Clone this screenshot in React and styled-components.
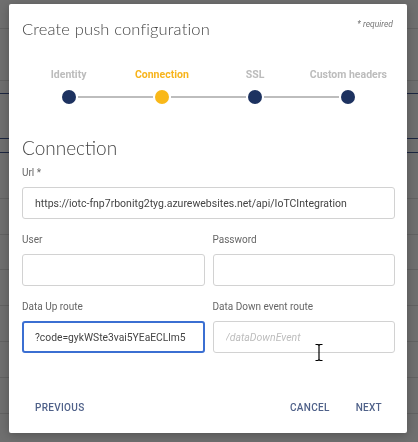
import React from "react";
import styled, { createGlobalStyle } from "styled-components";

const Global = createGlobalStyle`
  html, body { margin: 0; padding: 0; }
  body {
    width: 418px;
    height: 442px;
    overflow: hidden;
    background: #6f6f6f;
    font-family: Roboto, "Liberation Sans", sans-serif;
  }
`;

const Page = styled.div`
  display: flex;
  flex-direction: column;
  width: 418px;
`;

const BgRow = styled.div`
  height: ${(p) => p.$h}px;
  box-sizing: border-box;
  border-bottom: 1px solid ${(p) => (p.$dark ? "#1c2640" : "#626262")};
`;

const Overlay = styled.div`
  position: fixed;
  inset: 0;
  padding: 4px 11px 9px 9px;
  display: flex;
`;

const Dialog = styled.div`
  flex: 1;
  background: #ffffff;
  border-radius: 2px;
  box-shadow: 0 2px 10px rgba(0, 0, 0, 0.25);
  padding: 0 12px 0 13px;
  display: flex;
  flex-direction: column;
`;

const Header = styled.div`
  display: flex;
  justify-content: space-between;
  align-items: flex-start;
  padding-top: 15px;
`;

const Title = styled.h1`
  margin: 0;
  font-family: Lato, "Open Sans", sans-serif;
  font-weight: 300;
  font-size: 16.5px;
  line-height: 20px;
  color: #444;
  letter-spacing: 0.15px;
`;

const Required = styled.span`
  font-size: 8.5px;
  font-style: italic;
  color: #777;
  margin-right: 2px;
`;

const Stepper = styled.div`
  display: grid;
  grid-template-columns: repeat(4, 1fr);
  margin-top: 29px;
`;

const Step = styled.div`
  display: flex;
  flex-direction: column;
  align-items: stretch;
`;

const StepLabel = styled.div`
  text-align: center;
  font-size: 10.5px;
  font-weight: 700;
  line-height: 14px;
  color: ${(p) => (p.$active ? "#f7b41c" : "#bcbcbc")};
`;

const DotRow = styled.div`
  display: flex;
  align-items: center;
  margin-top: 8px;
  height: 14px;
`;

const Half = styled.div`
  flex: 1;
  height: 2px;
  background: ${(p) => (p.$hidden ? "transparent" : "#bdbdbd")};
`;

const Dot = styled.div`
  width: 14px;
  height: 14px;
  border-radius: 50%;
  margin: 0 2px;
  background: ${(p) => (p.$active ? "#f9b819" : "#1d3260")};
`;

const Section = styled.h2`
  margin: 33px 0 0;
  font-family: Lato, "Open Sans", sans-serif;
  font-weight: 300;
  font-size: 19px;
  line-height: 22px;
  color: #444;
`;

const Grid = styled.div`
  display: grid;
  grid-template-columns: 1fr 1fr;
  column-gap: 8px;
  row-gap: 14px;
  margin-top: 7px;
`;

const Field = styled.div`
  display: flex;
  flex-direction: column;
  grid-column: ${(p) => (p.$full ? "1 / -1" : "auto")};
  position: relative;
`;

const Label = styled.label`
  font-size: 10px;
  line-height: 14px;
  color: #666;
  margin-bottom: 7px;
`;

const Input = styled.input`
  box-sizing: border-box;
  height: 32px;
  width: 100%;
  border: ${(p) => (p.$focus ? "2px solid #3b6fd2" : "1px solid #d2d2d2")};
  border-radius: 3px;
  padding: 0 ${(p) => (p.$focus ? 11 : 12)}px;
  font-family: Roboto, "Liberation Sans", sans-serif;
  font-size: ${(p) => (p.$focus ? "10.3px" : "10.5px")};
  color: #444;
  outline: none;
  background: #fff;
  &::placeholder {
    color: #bdbdbd;
    font-style: italic;
  }
`;

const Cursor = styled.svg`
  position: absolute;
  left: 102px;
  top: 44px;
  pointer-events: none;
`;

const Footer = styled.div`
  margin-top: auto;
  margin-bottom: 12px;
  display: flex;
  align-items: center;
`;

const Spacer = styled.div`
  flex: 1;
`;

const TextButton = styled.button`
  border: none;
  background: none;
  padding: 0 13px;
  height: 28px;
  font-family: Roboto, "Liberation Sans", sans-serif;
  font-size: 10px;
  font-weight: 500;
  letter-spacing: 0.3px;
  color: #4f6189;
  cursor: pointer;
`;

const bgRows = [
  { h: 29 }, { h: 52 }, { h: 13, dark: true }, { h: 45, dark: true },
  { h: 14, dark: true }, { h: 46 }, { h: 36 }, { h: 35 }, { h: 36 },
  { h: 36 }, { h: 36 }, { h: 36 }, { h: 36 },
];

const steps = ["Identity", "Connection", "SSL", "Custom headers"];

export default function App() {
  return (
    <>
      <Global />
      <Page>
        {bgRows.map((r, i) => (
          <BgRow key={i} $h={r.h} $dark={r.dark} />
        ))}
      </Page>
      <Overlay>
        <Dialog>
          <Header>
            <Title>Create push configuration</Title>
            <Required>* required</Required>
          </Header>
          <Stepper>
            {steps.map((s, i) => (
              <Step key={s}>
                <StepLabel $active={i === 1}>{s}</StepLabel>
                <DotRow>
                  <Half $hidden={i === 0} />
                  <Dot $active={i === 1} />
                  <Half $hidden={i === steps.length - 1} />
                </DotRow>
              </Step>
            ))}
          </Stepper>
          <Section>Connection</Section>
          <Grid>
            <Field $full>
              <Label>Url *</Label>
              <Input
                readOnly
                value="https://iotc-fnp7rbonitg2tyg.azurewebsites.net/api/IoTCIntegration"
              />
            </Field>
            <Field>
              <Label>User</Label>
              <Input readOnly value="" />
            </Field>
            <Field>
              <Label>Password</Label>
              <Input readOnly value="" type="text" />
            </Field>
            <Field>
              <Label>Data Up route</Label>
              <Input $focus readOnly value="?code=gykWSte3vai5YEaECLlm5" />
            </Field>
            <Field>
              <Label>Data Down event route</Label>
              <Input readOnly value="" placeholder="/dataDownEvent" />
              <Cursor width="8" height="17" viewBox="0 0 8 17">
                <path
                  d="M0.5 0.5h2.5l1 1 1-1h2.5M4 1.5v14M0.5 16.5h2.5l1-1 1 1h2.5"
                  fill="none"
                  stroke="#000"
                  strokeWidth="1.2"
                />
              </Cursor>
            </Field>
          </Grid>
          <Footer>
            <TextButton>PREVIOUS</TextButton>
            <Spacer />
            <TextButton>CANCEL</TextButton>
            <TextButton>NEXT</TextButton>
          </Footer>
        </Dialog>
      </Overlay>
    </>
  );
}
